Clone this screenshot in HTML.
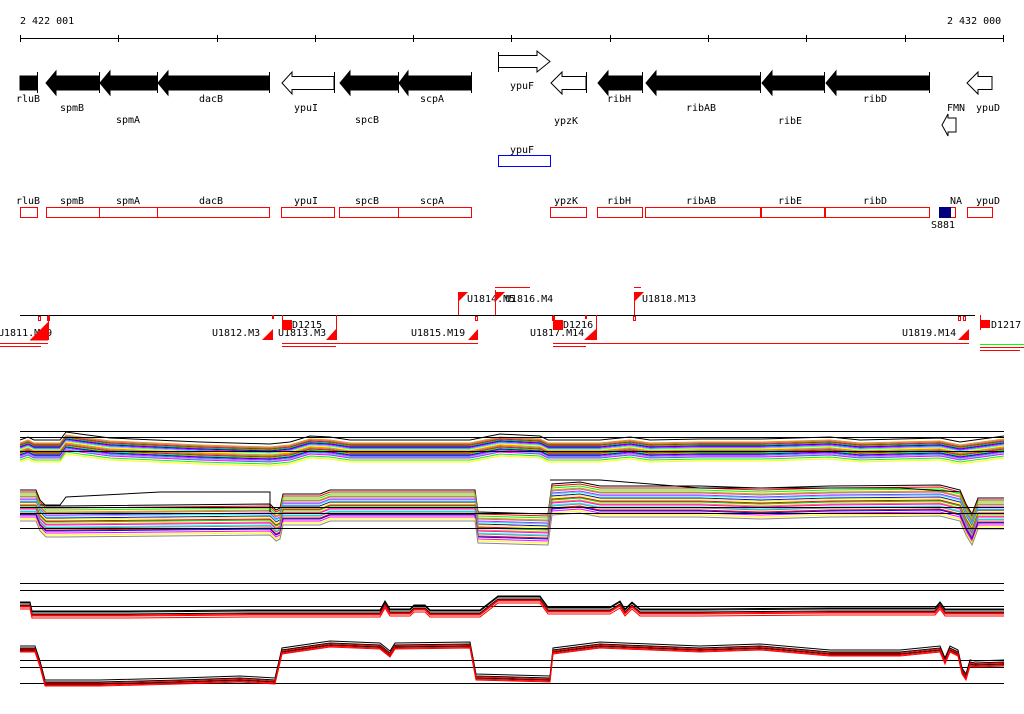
<!DOCTYPE html>
<html><head><meta charset="utf-8"><style>
html,body{margin:0;padding:0;background:#fff;}
svg{display:block;font-family:"DejaVu Sans Mono","Liberation Mono",monospace;font-size:10px;}
</style></head><body>
<svg width="1024" height="714" viewBox="0 0 1024 714" xmlns="http://www.w3.org/2000/svg">
<defs>
<path id="g1" fill="none" d="M20,0 L28,-3 L34,0 L60,0 L66,-8 L80,-6 L110,-2 L200,2 L270,4 L290,2 L310,-4 L330,-3 L350,0 L470,0 L480,-2 L500,-6 L540,-4 L548,0 L600,0 L630,-3 L650,0 L700,-1 L760,-1 L830,-3 L860,0 L940,-2 L960,2 L1004,-4"/>
<path id="g2" fill="none" d="M20,0 L36,0 L40,10 L46,16 L60,16 L270,14 L276,20 L280,18 L283,4 L320,4 L330,0 L475,0 L478,22 L548,24 L552,-6 L580,-8 L600,-4 L700,-4 L760,-2 L830,-4 L940,-5 L960,0 L966,14 L972,24 L978,8 L1004,8"/>
<path id="g3" fill="none" d="M20,-5 L30,-5 L32,4 L120,4 L250,3 L380,3 L385,-6 L390,2 L410,2 L414,-2 L425,-2 L430,3 L480,3 L498,-11 L540,-11 L548,0 L610,0 L620,-6 L625,2 L632,-5 L640,2 L700,2 L830,1 L935,1 L940,-5 L945,2 L1004,2"/>
<path id="g4" fill="none" d="M20,0 L35,0 L40,15 L45,34 L100,34 L180,32 L240,30 L275,32 L282,2 L330,-5 L380,-3 L390,5 L395,-3 L470,-4 L476,28 L550,30 L553,2 L600,-4 L700,0 L760,-2 L830,4 L900,4 L940,0 L945,12 L950,0 L958,4 L962,22 L966,28 L970,14 L975,15 L1004,14"/>
</defs>
<text x="20" y="24" fill="#000">2 422 001</text>
<text x="947" y="24" fill="#000">2 432 000</text>
<g stroke="#000" stroke-width="1">
<line x1="20" y1="38.5" x2="1004" y2="38.5"/>
<path d="M20.5,35V42M118.5,35V42M217.5,35V42M315.5,35V42M413.5,35V42M511.5,35V42M610.5,35V42M708.5,35V42M806.5,35V42M905.5,35V42M1003.5,35V42"/>
</g>
<g fill="#000" stroke="#000">
<rect x="20" y="76" width="17" height="14"/>
<path d="M99,76H56V71L46,83L56,95V90H99Z"/>
<path d="M157,76H110V71L100,83L110,95V90H157Z"/>
<path d="M269,76H168V71L158,83L168,95V90H269Z"/>
<path d="M398,76H350V71L340,83L350,95V90H398Z"/>
<path d="M471,76H408V71L399,83L408,95V90H471Z"/>
<path d="M642,76H608V71L598,83L608,95V90H642Z"/>
<path d="M760,76H656V71L646,83L656,95V90H760Z"/>
<path d="M824,76H772V71L762,83L772,95V90H824Z"/>
<path d="M929,76H836V71L826,83L836,95V90H929Z"/>
</g>
<g fill="#fff" stroke="#000">
<path d="M334,76.5H292V72L282,83L292,94V89.5H334Z"/>
<path d="M498.5,55.5H537V51L550,61.5L537,72V67.5H498.5Z"/>
<path d="M586,76.5H562V72L551,83L562,94V89.5H586Z"/>
<path d="M992,76.5H978V72L967,83L978,94V89.5H992Z"/>
<path d="M956,118H948V114L942,125L948,136V132H956Z"/>
</g>
<g stroke="#000"><path d="M37.5,72V93M99.5,72V93M157.5,72V93M269.5,72V93M334.5,72V93M398.5,72V93M471.5,72V93M498.5,52V72M586.5,72V93M642.5,72V93M760.5,72V93M824.5,72V93M929.5,72V93"/></g>
<g fill="#000" text-anchor="middle">
<text x="28" y="102">rluB</text><text x="72" y="111">spmB</text><text x="128" y="123">spmA</text>
<text x="211" y="102">dacB</text><text x="306" y="111">ypuI</text><text x="367" y="123">spcB</text>
<text x="432" y="102">scpA</text><text x="522" y="89">ypuF</text><text x="566" y="124">ypzK</text>
<text x="619" y="102">ribH</text><text x="701" y="111">ribAB</text><text x="790" y="124">ribE</text>
<text x="875" y="102">ribD</text><text x="956" y="111">FMN</text><text x="988" y="111">ypuD</text>
<text x="522" y="153">ypuF</text>
</g>
<rect x="498.5" y="155.5" width="52" height="11" fill="none" stroke="#00f"/>
<g fill="#000" text-anchor="middle">
<text x="28" y="204">rluB</text><text x="72" y="204">spmB</text><text x="128" y="204">spmA</text>
<text x="211" y="204">dacB</text><text x="306" y="204">ypuI</text><text x="367" y="204">spcB</text>
<text x="432" y="204">scpA</text><text x="566" y="204">ypzK</text><text x="619" y="204">ribH</text>
<text x="701" y="204">ribAB</text><text x="790" y="204">ribE</text><text x="875" y="204">ribD</text>
<text x="956" y="204">NA</text><text x="988" y="204">ypuD</text><text x="943" y="228">S881</text>
</g>
<g fill="none" stroke="#f00">
<rect x="20.5" y="207.5" width="17" height="10"/>
<rect x="46.5" y="207.5" width="53" height="10"/><rect x="99.5" y="207.5" width="58" height="10"/>
<rect x="157.5" y="207.5" width="112" height="10"/><rect x="281.5" y="207.5" width="53" height="10"/>
<rect x="339.5" y="207.5" width="59" height="10"/><rect x="398.5" y="207.5" width="73" height="10"/>
<rect x="550.5" y="207.5" width="36" height="10"/><rect x="597.5" y="207.5" width="45" height="10"/>
<rect x="645.5" y="207.5" width="115" height="10"/><rect x="761.5" y="207.5" width="63" height="10"/>
<rect x="825.5" y="207.5" width="104" height="10"/><rect x="942.5" y="207.5" width="13" height="10"/>
<rect x="967.5" y="207.5" width="25" height="10"/>
</g>
<rect x="939" y="207" width="12" height="11" fill="#00007f"/>
<line x1="20" y1="315.5" x2="975" y2="315.5" stroke="#000"/>
<g fill="#000">
<text x="-2" y="336">U1811.M19</text><text x="212" y="336">U1812.M3</text><text x="278" y="336">U1813.M3</text>
<text x="411" y="336">U1815.M19</text><text x="530" y="336">U1817.M14</text><text x="902" y="336">U1819.M14</text>
<text x="292" y="328">D1215</text><text x="563" y="328">D1216</text><text x="991" y="328">D1217</text>
<text x="467" y="302">U1814.M5</text><text x="505" y="302">U1816.M4</text><text x="642" y="302">U1818.M13</text>
</g>
<g fill="#f00">
<path d="M30,340L48,340L48,322Z"/><path d="M262,340L273,340L273,329Z"/><path d="M326,340L336,340L336,329Z"/>
<path d="M468,340L478,340L478,329Z"/><path d="M584,340L596,340L596,329Z"/><path d="M958,340L969,340L969,329Z"/>
<path d="M458,292L468,292L458,302Z"/><path d="M495,292L505,292L495,302Z"/><path d="M634,292L644,292L634,302Z"/>
<rect x="282" y="320" width="10" height="10"/><rect x="553" y="320" width="10" height="10"/><rect x="980" y="320" width="10" height="8"/>
<rect x="272" y="315" width="2" height="4"/><rect x="585" y="315" width="2" height="4"/>
</g>
<g stroke="#f00" fill="none">
<path d="M458.5,292V315M495.5,290V315M634.5,292V315M282.5,315V330M336.5,315V340M553.5,315V330M596.5,315V340M980.5,315V330M48.5,315V340"/>
<path d="M0,343.5H48M0,346.5H41M282,343.5H478M282,346.5H336M553,343.5H969M553,346.5H586M980,347.5H1024M980,350.5H1020M495,287.5H530M634,287.5H641M30,340H48"/>
<rect x="38.5" y="316.5" width="2" height="4"/><rect x="47.5" y="316.5" width="2" height="4"/><rect x="475.5" y="316.5" width="2" height="4"/><rect x="552.5" y="316.5" width="2" height="4"/><rect x="633.5" y="316.5" width="2" height="4"/><rect x="958.5" y="316.5" width="2" height="4"/><rect x="963.5" y="316.5" width="2" height="4"/>
</g>
<line x1="980" y1="344.5" x2="1024" y2="344.5" stroke="#0f0"/>
<g stroke-width="1">
<use href="#g1" y="440" stroke="#000"/>
<use href="#g1" y="443" stroke="#f80"/><use href="#g1" y="444" stroke="#888"/><use href="#g1" y="445" stroke="#f00"/>
<use href="#g1" y="446" stroke="#0c0"/><use href="#g1" y="447" stroke="#00f"/><use href="#g1" y="448" stroke="#f0f"/>
<use href="#g1" y="449" stroke="#0ff"/><use href="#g1" y="450" stroke="#ff0"/><use href="#g1" y="451" stroke="#f80"/>
<use href="#g1" y="452" stroke="#888"/><use href="#g1" y="453" stroke="#f00"/><use href="#g1" y="454" stroke="#0f0"/>
<use href="#g1" y="455" stroke="#00f"/><use href="#g1" y="456" stroke="#f0f"/><use href="#g1" y="457" stroke="#0ff"/>
<use href="#g1" y="458" stroke="#f0f"/><use href="#g1" y="460" stroke="#0f0"/><use href="#g1" y="462" stroke="#ff0"/>
</g>
<g stroke="#000"><path d="M20,431.5H1004M20,437.5H1004M20,451.5H1004"/></g>
<g>
<use href="#g2" y="490" stroke="#000"/><use href="#g2" y="492" stroke="#f00"/>
<use href="#g2" y="494" stroke="#0f0"/><use href="#g2" y="496" stroke="#f80"/><use href="#g2" y="497" stroke="#888"/>
<use href="#g2" y="499" stroke="#f0f"/><use href="#g2" y="500" stroke="#0ff"/><use href="#g2" y="502" stroke="#00f"/>
<use href="#g2" y="503" stroke="#ff0"/><use href="#g2" y="505" stroke="#f00"/><use href="#g2" y="506" stroke="#0c0"/>
<use href="#g2" y="508" stroke="#f80"/><use href="#g2" y="509" stroke="#f0f"/><use href="#g2" y="511" stroke="#0ff"/>
<use href="#g2" y="512" stroke="#888"/><use href="#g2" y="514" stroke="#f00"/><use href="#g2" y="515" stroke="#00f"/>
<use href="#g2" y="517" stroke="#f0f"/><use href="#g2" y="519" stroke="#ff0"/><use href="#g2" y="521" stroke="#888"/>
</g>
<path d="M40,505L60,505L66,497L160,492L270,492L270,512" fill="none" stroke="#000"/>
<path d="M550,480L600,480L700,488L900,488L960,492" fill="none" stroke="#000"/>
<g stroke="#000"><path d="M20,507.5H1004M20,513.5H1004M20,528.5H1004"/></g>
<g stroke="#000"><path d="M20,583.5H1004M20,590.5H1004M20,606.5H1004"/></g>
<use href="#g3" y="607" stroke="#000"/><use href="#g3" y="608" stroke="#000"/><use href="#g3" y="610" stroke="#000"/>
<use href="#g3" y="611" stroke="#f00"/><use href="#g3" y="612" stroke="#f00"/><use href="#g3" y="614" stroke="#f00"/>
<g stroke="#000"><path d="M20,660.5H1004M20,667.5H1004M20,683.5H1004"/></g>
<use href="#g4" y="646" stroke="#000"/><use href="#g4" y="648" stroke="#000"/><use href="#g4" y="650" stroke="#000"/>
<use href="#g4" y="649" stroke="#f00"/><use href="#g4" y="651" stroke="#f00"/><use href="#g4" y="652" stroke="#f00"/>
</svg>
</body></html>
